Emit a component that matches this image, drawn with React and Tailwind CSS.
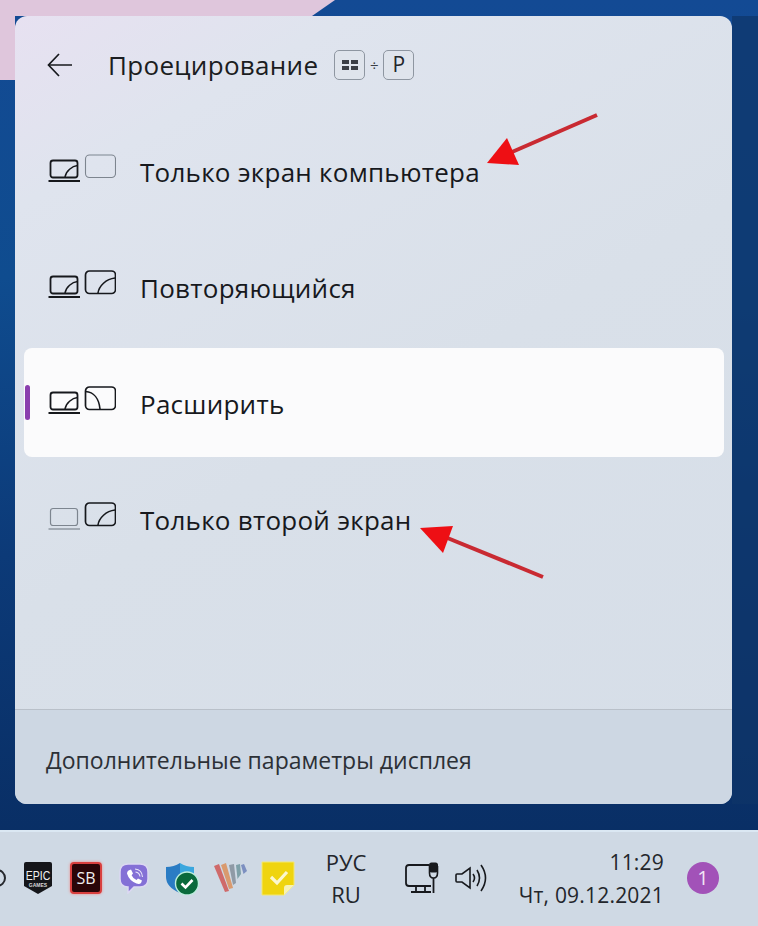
const font = "font-['Open_Sans',sans-serif]";

const rows = [
  { label: "Только экран компьютера", laptop: true, screen: "none" },
  { label: "Повторяющийся", laptop: true, screen: "right" },
  { label: "Расширить", laptop: true, screen: "left", active: true },
  { label: "Только второй экран", laptop: false, screen: "right" },
];

// laptop + second monitor pictogram
function ModeIcon({ laptop, screen }) {
  const laptopColor = laptop ? "#16181c" : "#7d858f";
  const screenColor = screen === "none" ? "#7d858f" : "#16181c";
  return (
    <svg width="68" height="30" viewBox="0 0 68 30" fill="none" className="shrink-0 mb-[6px]">
      <rect x="2.5" y="7.5" width="27" height="17" rx="2.5" stroke={laptopColor} strokeWidth={laptop ? 1.8 : 1.2} />
      {laptop && <path d="M17 24C18 18 24 13 29.5 12.5" stroke={laptopColor} strokeWidth="1.5" />}
      <path d="M0.5 28H32" stroke={laptopColor} strokeWidth={laptop ? 2 : 1.2} />
      <rect x="37.5" y="2" width="30" height="22.5" rx="4" stroke={screenColor} strokeWidth={screen === "none" ? 1.1 : 1.7} />
      {screen === "right" && <path d="M50 24C51 17 58 10 67 9" stroke={screenColor} strokeWidth="1.6" />}
      {screen === "left" && <path d="M37.5 6.5C46 7 51 14 52 24" stroke={screenColor} strokeWidth="1.6" />}
    </svg>
  );
}

function ModeRow({ label, laptop, screen, active }) {
  return (
    <div className={`relative flex h-[109px] items-center gap-6 rounded-[8px] pl-6 ${active ? "bg-[#fbfbfc]" : ""}`}>
      {active && <span className="absolute left-[1px] top-[37px] h-[35px] w-[5px] rounded-full bg-[#8a3fae]" />}
      <ModeIcon laptop={laptop} screen={screen} />
      <span className="mt-[2px] text-[26px] leading-8 tracking-[0.25px] text-[#17191d]">{label}</span>
    </div>
  );
}

function KeyCap({ children }) {
  return (
    <span className="flex h-[30px] w-[31px] items-center justify-center rounded-[5px] border border-[#8e96a1] bg-[#dfe4ec] text-[21px] text-[#23262b]">
      {children}
    </span>
  );
}

function BackArrow() {
  return (
    <svg width="26" height="24" viewBox="0 0 26 24" fill="none" stroke="#17191d" strokeWidth="1.7">
      <path d="M12 1L1.5 12L12 23" />
      <path d="M1.5 12H25" />
    </svg>
  );
}

function EpicIcon() {
  return (
    <svg width="28" height="32" viewBox="0 0 28 32">
      <path d="M2 0H26Q28 0 28 2V24L14 32L0 24V2Q0 0 2 0Z" fill="#15161a" />
      <text x="14" y="13.5" transform="scale(1 1.3)" textAnchor="middle" fill="#f2f2f2" fontSize="10.5" fontFamily="Liberation Sans">EPIC</text>
      <text x="14" y="25" textAnchor="middle" fill="#d8d8d8" fontSize="5" fontWeight="700" fontFamily="Liberation Sans">GAMES</text>
    </svg>
  );
}

function ViberIcon() {
  return (
    <svg width="30" height="31" viewBox="0 0 30 31">
      <path d="M9 1H21Q29 1 29 9V16Q29 24 21 24H15L9 30V24Q1 24 1 16V9Q1 1 9 1Z" fill="#8470d6" stroke="#dcd8f2" strokeWidth="1.5" />
      <path d="M9.5 7.5L12 6.5L14 10.5L12.6 12.2Q14 15.5 17.5 17L19 15.5L23 17.5L22 20Q20.5 21.5 17.5 20.5Q10 17.5 8 10.5Q8 8.5 9.5 7.5Z" fill="#fff" />
      <path d="M16 6Q23 6.5 23.5 14M16.5 9Q20.5 9.5 21 13.5" stroke="#e9e5fa" strokeWidth="1.1" fill="none" />
    </svg>
  );
}

function ShieldIcon() {
  return (
    <svg width="34" height="33" viewBox="0 0 34 33">
      <path d="M15 1Q9 5 1 5V15Q1 25 15 31Z" fill="#2a7cc4" />
      <path d="M15 1Q21 5 29 5V15Q29 25 15 31Z" fill="#3ba7de" />
      <circle cx="22" cy="21.5" r="11.5" fill="#0a6a3c" stroke="#bdeedd" strokeWidth="1.4" />
      <path d="M16.5 21.5L20.5 25.5L27.5 18" stroke="#fff" strokeWidth="2.6" fill="none" />
    </svg>
  );
}

function StripesIcon() {
  return (
    <svg width="33" height="30" viewBox="0 0 33 30">
      <path d="M0 3L5 1L15 28L11 29Z" fill="#cf6a6a" />
      <path d="M7 2L12 0L19 25L15 26Z" fill="#d99a6e" />
      <path d="M15 2L20 1L22 20L19 22Z" fill="#8f9aa6" />
      <path d="M22 2L26 1L27 11L23.5 16Z" fill="#7ea0a8" />
      <path d="M27 2L30 1L33 8L29.5 11Z" fill="#7c8fc0" />
    </svg>
  );
}

function NoteIcon() {
  return (
    <svg width="34" height="35" viewBox="0 0 34 35">
      <path d="M1 1H33V24L23 34H1Z" fill="#efd40f" stroke="#f3e873" strokeWidth="1" />
      <path d="M23 34V27Q23 24 26 24H33Z" fill="#f7f2b4" />
      <path d="M10 16L16 22L26 11" stroke="#fbf7cf" strokeWidth="3.2" fill="none" />
    </svg>
  );
}

function NetworkIcon() {
  return (
    <svg width="36" height="34" viewBox="0 0 36 34" fill="none" stroke="#17191d">
      <path d="M24 4H4Q1 4 1 7V22Q1 25 4 25H26" strokeWidth="1.8" />
      <path d="M11 25V30M20 25V30M6 31H26" strokeWidth="1.8" />
      <rect x="24" y="1.5" width="9" height="10" rx="2.5" fill="#17191d" stroke="none" />
      <path d="M24.5 5V12Q24.5 17 28.5 17Q32.5 17 32.5 12V5" strokeWidth="1.6" />
      <path d="M28.5 17V32" strokeWidth="1.8" />
    </svg>
  );
}

function SpeakerIcon() {
  return (
    <svg width="33" height="28" viewBox="0 0 33 28" fill="none" stroke="#17191d" strokeWidth="1.6">
      <path d="M2 10H7L15 4V24L7 18H2Q1 18 1 17V11Q1 10 2 10Z" />
      <path d="M18 10Q21 14 18 18" />
      <path d="M22 6Q27 14 22 22" />
      <path d="M26 1Q35 14 26 27" />
    </svg>
  );
}

export default function App() {
  return (
    <div className={`relative h-[926px] w-[758px] overflow-hidden bg-[linear-gradient(180deg,#134a94_0%,#0f4c8f_30%,#0c3a78_60%,#082b5f_100%)] ${font}`}>
      {/* wallpaper: pink corner and darker right side */}
      <svg className="absolute inset-0" width="758" height="926" viewBox="0 0 758 926">
        <path d="M0 0H335L312 16H15V80H0Z" fill="#dfc6dc" />
        <path d="M732 16H758V804H732Z" fill="#0e3468" opacity="0.7" />
      </svg>

      <div className="relative flex h-full flex-col pl-[15px] pt-4">
        <div className="flex h-[788px] w-[717px] flex-col overflow-hidden rounded-[12px] bg-[linear-gradient(150deg,#e7e1f1_0%,#dfe4ee_16%,#d9e0e9_50%,#d6dee8_100%)]">
          <div className="flex h-[100px] items-center pb-[2px] pl-[32px]">
            <BackArrow />
            <span className="ml-[35px] text-[26px] leading-8 tracking-[0.3px] text-[#1b1d21]">Проецирование</span>
            <div className="ml-4 flex items-center">
              <KeyCap>
                <span className="grid grid-cols-2 gap-[2px]">
                  <i className="h-[4px] w-[7px] bg-[#3a3e45]" />
                  <i className="h-[4px] w-[7px] bg-[#3a3e45]" />
                  <i className="h-[4px] w-[7px] bg-[#3a3e45]" />
                  <i className="h-[4px] w-[7px] bg-[#3a3e45]" />
                </span>
              </KeyCap>
              <span className="w-[18px] text-center text-[15px] text-[#3a3e45]">÷</span>
              <KeyCap>P</KeyCap>
            </div>
          </div>

          <div className="flex flex-1 flex-col gap-[7px] pl-[9px] pr-2">
            {rows.map((row) => (
              <ModeRow key={row.label} {...row} />
            ))}
          </div>

          <div className="flex h-[95px] items-center border-t border-[#b9c0c9] bg-[#cdd7e3] pl-[31px]">
            <span className="mt-[6px] text-[23px] leading-7 text-[#2c3036]">Дополнительные параметры дисплея</span>
          </div>
        </div>
      </div>

      {/* red annotation arrows */}
      <svg className="absolute inset-0" width="758" height="926" viewBox="0 0 758 926">
        <path d="M597 115L512 152" stroke="#c92a32" strokeWidth="4" />
        <path d="M487 163L507 138L519 165Z" fill="#ee0f14" />
        <path d="M543 577L445 537" stroke="#c92a32" strokeWidth="4" />
        <path d="M420 528L453 526L443 553Z" fill="#ee0f14" />
      </svg>

      {/* taskbar */}
      <div className="absolute bottom-0 left-0 flex h-[96px] w-full items-center border-t-2 border-[#dbe8f3] bg-[#cfd9e4] pb-[2px]">
        <span className="h-[18px] w-[6px] shrink-0 overflow-hidden">
          <span className="ml-[-12px] block h-[18px] w-[18px] rounded-full border-2 border-[#25282d]" />
        </span>
        <div className="ml-2 flex items-center">
          <span className="flex w-12 justify-center"><EpicIcon /></span>
          <span className="flex w-12 justify-center">
            <span className="flex h-[32px] w-[32px] items-center justify-center rounded-[4px] border-2 border-[#d8403f] bg-[#2a0508] text-[16px] text-[#f0eeee] shadow-[0_0_3px_#ef8a88]">SB</span>
          </span>
          <span className="flex w-12 justify-center"><ViberIcon /></span>
          <span className="flex w-12 justify-center"><ShieldIcon /></span>
          <span className="flex w-12 justify-center"><StripesIcon /></span>
          <span className="flex w-12 justify-center"><NoteIcon /></span>
        </div>
        <div className="ml-[21px] flex w-[46px] flex-col items-center gap-[8px] text-[22px] leading-6 text-[#23262b]">
          <span>РУС</span>
          <span>RU</span>
        </div>
        <div className="ml-[36px]"><NetworkIcon /></div>
        <div className="ml-[14px]"><SpeakerIcon /></div>
        <div className="ml-[30px] flex w-[146px] flex-col items-end gap-[9px] text-[21px] leading-6 tracking-[0.2px] text-[#23262b]">
          <span>11:29</span>
          <span>Чт, 09.12.2021</span>
        </div>
        <span className="ml-[23px] flex h-8 w-8 items-center justify-center rounded-full bg-[#a252b8] text-[20px] text-[#f1e6f4]">1</span>
      </div>
    </div>
  );
}
